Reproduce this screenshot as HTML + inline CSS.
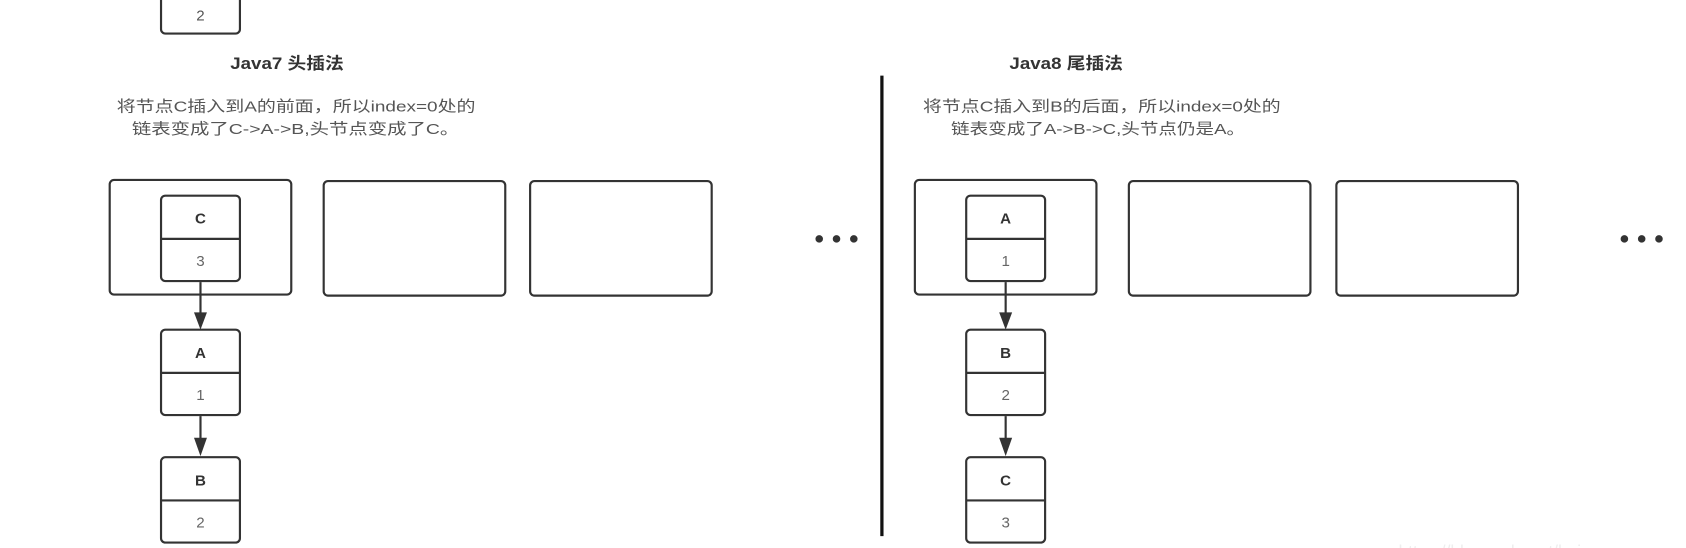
<!DOCTYPE html>
<html><head><meta charset="utf-8"><style>
html,body{margin:0;padding:0;background:#fff;overflow:hidden}
svg{display:block}
text{font-family:"Liberation Sans","Noto Sans CJK SC",sans-serif}
</style></head><body>
<svg width="1686" height="548" viewBox="0 0 1560 507" xmlns="http://www.w3.org/2000/svg">
<defs>
<g id="node">
<rect x="0" y="0" width="73" height="79" rx="4" fill="#fff" stroke="#333" stroke-width="2"/>
<line x1="0" y1="40" x2="73" y2="40" stroke="#333" stroke-width="2"/>
</g>
<g id="arr">
<line x1="0" y1="0" x2="0" y2="30" stroke="#333" stroke-width="2"/>
<path d="M-6,28 L6,28 L0,44 Z" fill="#333"/>
</g>
<g id="arr2">
<line x1="0" y1="0" x2="0" y2="22" stroke="#333" stroke-width="2"/>
<path d="M-6,20 L6,20 L0,37 Z" fill="#333"/>
</g>
</defs>
<g fill="none" stroke="#333" stroke-width="2">
<rect x="149" y="-20" width="73" height="51" rx="4" fill="#fff"/>
<rect x="101.5" y="166.5" width="168" height="106" rx="4"/>
<rect x="299.5" y="167.5" width="168" height="106" rx="4"/>
<rect x="490.5" y="167.5" width="168" height="106" rx="4"/>
<rect x="846.5" y="166.5" width="168" height="106" rx="4"/>
<rect x="1044.5" y="167.5" width="168" height="106" rx="4"/>
<rect x="1236.5" y="167.5" width="168" height="106" rx="4"/>
</g>
<line x1="816" y1="70" x2="816" y2="496" stroke="#111" stroke-width="3"/>
<text x="185.5" y="19" font-size="14" fill="#555" text-anchor="middle">2</text>
<g font-weight="bold" font-size="15" fill="#333">
<text x="213" y="64" textLength="105" lengthAdjust="spacingAndGlyphs">Java7 头插法</text>
<text x="934" y="64" textLength="105" lengthAdjust="spacingAndGlyphs">Java8 尾插法</text>
</g>
<g font-size="14" fill="#555">
<text x="108" y="103" textLength="332" lengthAdjust="spacingAndGlyphs">将节点C插入到A的前面，所以index=0处的</text>
<text x="122" y="124" textLength="303" lengthAdjust="spacingAndGlyphs">链表变成了C-&gt;A-&gt;B,头节点变成了C。</text>
<text x="854" y="103" textLength="331" lengthAdjust="spacingAndGlyphs">将节点C插入到B的后面，所以index=0处的</text>
<text x="880" y="124" textLength="272" lengthAdjust="spacingAndGlyphs">链表变成了A-&gt;B-&gt;C,头节点仍是A。</text>
</g>
<use href="#node" x="149" y="181"/>
<use href="#arr" x="185.5" y="261"/>
<use href="#node" x="149" y="305"/>
<use href="#arr2" x="185.5" y="385"/>
<use href="#node" x="149" y="423"/>
<use href="#node" x="894" y="181"/>
<use href="#arr" x="930.5" y="261"/>
<use href="#node" x="894" y="305"/>
<use href="#arr2" x="930.5" y="385"/>
<use href="#node" x="894" y="423"/>
<g font-size="14" text-anchor="middle">
<text x="185.5" y="207" font-weight="bold" fill="#333">C</text>
<text x="185.5" y="246" fill="#666">3</text>
<text x="185.5" y="331" font-weight="bold" fill="#333">A</text>
<text x="185.5" y="370" fill="#666">1</text>
<text x="185.5" y="449" font-weight="bold" fill="#333">B</text>
<text x="185.5" y="488" fill="#666">2</text>
<text x="930.5" y="207" font-weight="bold" fill="#333">A</text>
<text x="930.5" y="246" fill="#666">1</text>
<text x="930.5" y="331" font-weight="bold" fill="#333">B</text>
<text x="930.5" y="370" fill="#666">2</text>
<text x="930.5" y="449" font-weight="bold" fill="#333">C</text>
<text x="930.5" y="488" fill="#666">3</text>
</g>
<g fill="#333">
<circle cx="758" cy="221" r="3.5"/><circle cx="774" cy="221" r="3.5"/><circle cx="790" cy="221" r="3.5"/>
<circle cx="1503" cy="221" r="3.5"/><circle cx="1519" cy="221" r="3.5"/><circle cx="1535" cy="221" r="3.5"/>
</g>
<text x="1294" y="516" font-size="16" fill="#eee">https://blog.csdn.net/hei_yes</text>
</svg>
</body></html>
